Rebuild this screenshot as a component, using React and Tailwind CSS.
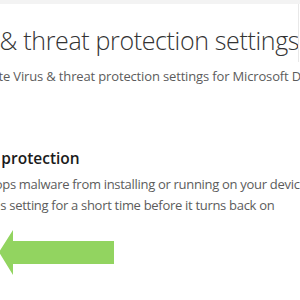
import React from 'react';

export default function App() {
    const font = { fontFamily: '"Open Sans", "Noto Sans", sans-serif' };

    return (
        <div className="w-[300px] h-[300px] bg-white overflow-hidden relative" style={font}>
            {/* top strip */}
            <div className="h-[4px] bg-[#f3f3f3]" />
            <div className="absolute right-[1px] top-[4px] w-px h-[58px] bg-[#e8e8e8]" />

            {/* title */}
            <div className="mt-[19px] whitespace-nowrap text-[25px] leading-[34px] font-light tracking-[-0.35px] text-[#333333] ml-[-61px]">
                Virus &amp; threat protection settings
            </div>

            {/* subtitle */}
            <div className="mt-[10px] whitespace-nowrap text-[13px] leading-[18px] tracking-[-0.15px] text-[#5c5c5c] ml-[-89px]">
                View and update Virus &amp; threat protection settings for Microsoft Defender Antivirus.
            </div>

            {/* section */}
            <div className="mt-[62px] whitespace-nowrap text-[15.5px] leading-[22px] font-semibold text-[#1b1b1b] ml-[-74px]">
                Real-time protection
            </div>
            <div className="mt-[5px] whitespace-nowrap text-[13px] leading-[21px] tracking-[-0.3px] text-[#5c5c5c]">
                <div className="ml-[-88px]">Locates and stops malware from installing or running on your device.</div>
                <div className="ml-[-110px]">You can turn off this setting for a short time before it turns back on</div>
            </div>

            {/* arrow */}
            <svg className="mt-[14px] block" width="120" height="48" viewBox="0 0 120 48">
                <polygon points="-1,22 13,0 13,11 114,11 114,34 13,34 13,45" fill="#92d460" />
            </svg>
        </div>
    );
}
